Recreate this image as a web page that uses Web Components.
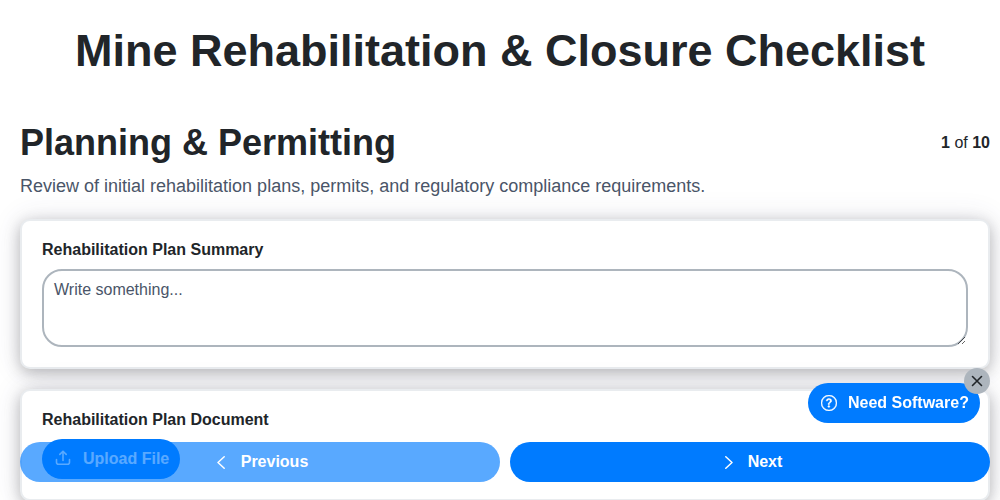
<!DOCTYPE html>
<html lang="en">
<head>
<meta charset="utf-8">
<title>Mine Rehabilitation &amp; Closure Checklist</title>
<style>
  html, body { margin: 0; height: 100%; overflow: hidden; background: #fff; }
  body { font-family: "Liberation Sans", Arial, sans-serif; color: #212529; }
</style>
</head>
<body>
<checklist-page>
  <checklist-card label="Rehabilitation Plan Summary">
    <checklist-textarea placeholder="Write something..."></checklist-textarea>
  </checklist-card>
  <checklist-card label="Rehabilitation Plan Document">
    <upload-button></upload-button>
  </checklist-card>
</checklist-page>
<nav-bar></nav-bar>
<software-widget></software-widget>

<script>
class ChecklistPage extends HTMLElement {
  constructor() {
    super();
    this.attachShadow({ mode: "open" });
  }

  connectedCallback() {
    this.shadowRoot.innerHTML = `
    <style>
      :host { display: block; }
      h1 {
        margin: 0;
        padding: 22px 0 0;
        font-size: 45px;
        line-height: 58px;
        font-weight: 700;
        text-align: center;
      }
      .section { padding: 0 10px 0 20px; }
      .head {
        display: flex;
        justify-content: space-between;
        align-items: flex-start;
        margin-top: 41px;
      }
      h2 { margin: 0; font-size: 36px; line-height: 43px; font-weight: 700; }
      .count { font-size: 16px; line-height: 18px; padding-top: 13px; }
      p { margin: 12px 0 22px; font-size: 18px; line-height: 21px; color: #4a5568; }
      .cards { display: flex; flex-direction: column; gap: 20px; }
    </style>
    <h1>Mine Rehabilitation &amp; Closure Checklist</h1>
    <div class="section">
      <div class="head">
        <h2>Planning &amp; Permitting</h2>
        <div class="count"><b>1</b> of <b>10</b></div>
      </div>
      <p>Review of initial rehabilitation plans, permits, and regulatory compliance requirements.</p>
      <div class="cards"><slot></slot></div>
    </div>
    `;
  }
}

class ChecklistCard extends HTMLElement {
  constructor() {
    super();
    this.attachShadow({ mode: "open" });
  }

  connectedCallback() {
    this.shadowRoot.innerHTML = `
    <style>
      :host {
        display: block;
        background: #fff;
        border: 2px solid #e9ecef;
        border-radius: 10px;
        padding: 20px;
        box-shadow: 0 4px 15px rgba(0, 0, 0, .25), 0 0 30px rgba(60, 60, 110, .12);
      }
      label { display: block; font-size: 16px; line-height: 18px; font-weight: 700; margin-bottom: 10px; }
    </style>
    <label>${this.getAttribute("label")}</label>
    <slot></slot>
    `;
  }
}

class ChecklistTextarea extends HTMLElement {
  constructor() {
    super();
    this.attachShadow({ mode: "open" });
  }

  connectedCallback() {
    this.shadowRoot.innerHTML = `
    <style>
      :host { display: block; }
      textarea {
        display: block;
        box-sizing: border-box;
        width: 100%;
        height: 78px;
        margin: 0;
        padding: 10px;
        border: 2px solid #adb5bd;
        border-radius: 20px;
        background: #fff;
        font: 16px/18px "Liberation Sans", Arial, sans-serif;
        color: #212529;
        outline: none;
      }
      textarea::placeholder { color: #4a5568; opacity: 1; }
    </style>
    <textarea placeholder="${this.getAttribute("placeholder")}"></textarea>
    `;
  }
}

class UploadButton extends HTMLElement {
  constructor() {
    super();
    this.attachShadow({ mode: "open" });
  }

  connectedCallback() {
    this.shadowRoot.innerHTML = `
    <style>
      :host { display: block; width: 138px; }
      button {
        display: flex;
        align-items: center;
        gap: 12px;
        box-sizing: border-box;
        width: 138px;
        height: 40px;
        padding: 0 0 0 13px;
        border: 0;
        border-radius: 20px;
        background: #007bff;
        color: #fff;
        font: 700 16px "Liberation Sans", Arial, sans-serif;
      }
      svg { width: 16px; height: 16px; margin-top: -3px; fill: none; stroke: currentColor; stroke-width: 1.6; stroke-linecap: round; stroke-linejoin: round; flex: none; }
    </style>
    <button>
      <svg viewBox="0 0 16 16">
        <path d="M1.5 9.5v2.7a2 2 0 0 0 2 2h9a2 2 0 0 0 2-2V9.5"/>
        <path d="M8 10.5V1.2M4.8 4.4 8 1.2l3.2 3.2"/>
      </svg>
      <span>Upload File</span>
    </button>
    `;
  }
}

class NavBar extends HTMLElement {
  constructor() {
    super();
    this.attachShadow({ mode: "open" });
  }

  connectedCallback() {
    this.shadowRoot.innerHTML = `
    <style>
      :host {
        position: fixed;
        left: 20px;
        right: 10px;
        top: 442px;
        display: grid;
        grid-template-columns: 1fr 1fr;
        gap: 10px;
      }
      button {
        display: flex;
        align-items: center;
        justify-content: center;
        height: 40px;
        border: 0;
        border-radius: 20px;
        background: #007bff;
        color: #fff;
        font: 700 16px "Liberation Sans", Arial, sans-serif;
      }
      .prev { opacity: .65; gap: 16px; padding: 0 0 0 5px; }
      .next { gap: 15px; padding: 0 0 0 7px; }
      svg { width: 8px; height: 13px; fill: none; stroke: currentColor; stroke-width: 1.5; stroke-linecap: round; stroke-linejoin: round; flex: none; }
    </style>
    <button class="prev">
      <svg viewBox="0 0 8 13"><path d="M7.2.8 1 6.5l6.2 5.7"/></svg>
      <span>Previous</span>
    </button>
    <button class="next">
      <svg viewBox="0 0 8 13"><path d="M.8.8 7 6.5.8 12.2"/></svg>
      <span>Next</span>
    </button>
    `;
  }
}

class SoftwareWidget extends HTMLElement {
  constructor() {
    super();
    this.attachShadow({ mode: "open" });
  }

  connectedCallback() {
    this.shadowRoot.innerHTML = `
    <style>
      :host { position: fixed; left: 808px; top: 383px; display: block; }
      .pill {
        display: flex;
        align-items: center;
        gap: 11px;
        box-sizing: border-box;
        width: 172px;
        height: 40px;
        padding: 0 0 0 13px;
        border: 0;
        border-radius: 20px;
        background: #007bff;
        color: #fff;
        font: 700 16px "Liberation Sans", Arial, sans-serif;
        white-space: nowrap;
      }
      .pill svg { width: 16px; height: 16px; fill: currentColor; stroke: currentColor; stroke-width: .4; flex: none; }
      .close {
        position: absolute;
        top: -15px;
        right: -10px;
        display: flex;
        align-items: center;
        justify-content: center;
        width: 26px;
        height: 26px;
        padding: 0;
        border: 0;
        border-radius: 50%;
        background: #adb5bd;
        color: #212529;
      }
      .close svg { width: 12px; height: 12px; fill: none; stroke: currentColor; stroke-width: 1.6; stroke-linecap: round; }
    </style>
    <button class="pill">
      <svg viewBox="0 0 16 16">
        <path d="M8 15A7 7 0 1 1 8 1a7 7 0 0 1 0 14zm0 1A8 8 0 1 0 8 0a8 8 0 0 0 0 16z"/>
        <path d="M5.255 5.786a.237.237 0 0 0 .241.247h.825c.138 0 .248-.113.266-.25.09-.656.54-1.134 1.342-1.134.686 0 1.314.343 1.314 1.168 0 .635-.374.927-.965 1.371-.673.489-1.206 1.06-1.168 1.987l.003.217a.25.25 0 0 0 .25.246h.811a.25.25 0 0 0 .25-.25v-.105c0-.718.273-.927 1.01-1.486.609-.463 1.244-.977 1.244-2.056 0-1.511-1.276-2.241-2.673-2.241-1.267 0-2.655.59-2.75 2.286zm1.557 5.763c0 .533.425.927 1.01.927.609 0 1.028-.394 1.028-.927 0-.552-.42-.94-1.029-.94-.584 0-1.009.388-1.009.94z"/>
      </svg>
      <span>Need Software?</span>
    </button>
    <button class="close" aria-label="Close">
      <svg viewBox="0 0 12 12"><path d="M1.5 1.5l9 9M10.5 1.5l-9 9"/></svg>
    </button>
    `;
  }
}

customElements.define("checklist-page", ChecklistPage);
customElements.define("checklist-card", ChecklistCard);
customElements.define("checklist-textarea", ChecklistTextarea);
customElements.define("upload-button", UploadButton);
customElements.define("nav-bar", NavBar);
customElements.define("software-widget", SoftwareWidget);
</script>
</body>
</html>
